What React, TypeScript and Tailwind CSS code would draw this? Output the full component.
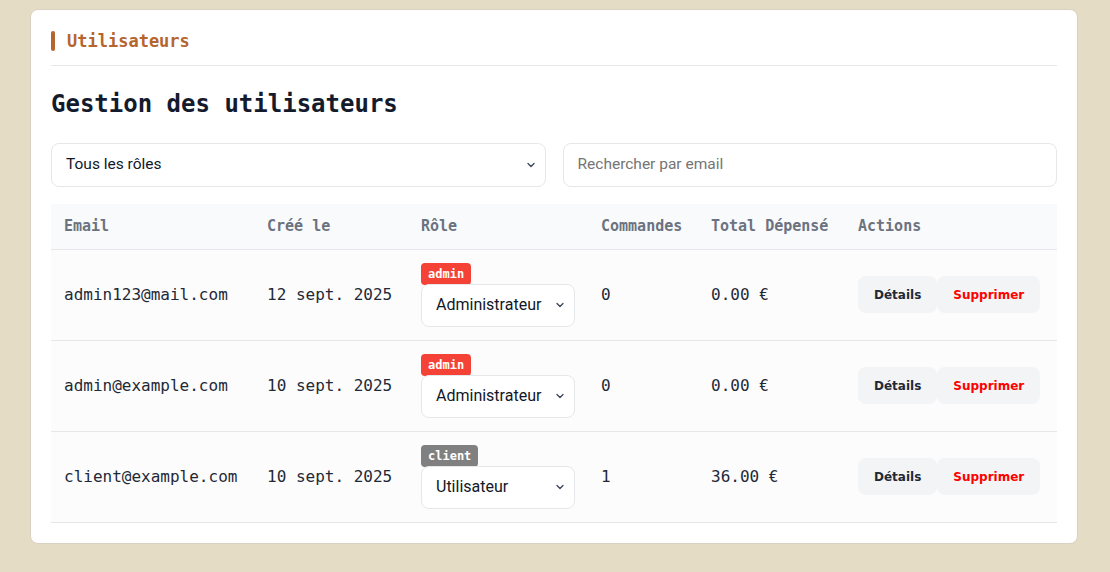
import { ChevronDown } from "lucide-react";

const users = [
  { email: "admin123@mail.com", created: "12 sept. 2025", role: "admin", label: "Administrateur", orders: 0, total: "0.00 €" },
  { email: "admin@example.com", created: "10 sept. 2025", role: "admin", label: "Administrateur", orders: 0, total: "0.00 €" },
  { email: "client@example.com", created: "10 sept. 2025", role: "client", label: "Utilisateur", orders: 1, total: "36.00 €" },
];

const mono = "font-['DejaVu_Sans_Mono',monospace]";

function FakeSelect({ value, className }: { value: string; className: string }) {
  return (
    <div
      className={`flex items-center justify-between rounded-lg border border-[#e5e7eb] bg-white pl-[14px] pr-[8px] font-['Roboto',sans-serif] text-[#111827] ${className}`}
    >
      <span>{value}</span>
      <ChevronDown className="h-[12px] w-[12px] text-[#374151]" strokeWidth={2.5} />
    </div>
  );
}

export default function App() {
  return (
    <div className="min-h-[572px] bg-[#e5dcc6] pt-[9px] pb-[30px]">
      <div className="ml-[30px] w-[1048px] rounded-lg border border-[#d9d2c2] bg-white px-[20px] pt-[21px] pb-[20px]">
        <div className="flex items-center gap-[12px] border-b border-[#e5e7eb] pb-[14px]">
          <span className="h-[20px] w-[4px] rounded-full bg-[#b5652e]" />
          <span className={`${mono} text-[17px] leading-[20px] font-bold text-[#b5652e]`}>Utilisateurs</span>
        </div>

        <h1 className={`${mono} mt-[22px] text-[24px] leading-[32px] font-bold text-[#141b2d]`}>
          Gestion des utilisateurs
        </h1>

        <div className="mt-[23px] grid grid-cols-2 gap-[17px]">
          <FakeSelect value="Tous les rôles" className="h-[44px] text-[15.5px]" />
          <div className="flex h-[44px] items-center rounded-lg border border-[#e5e7eb] bg-white px-[14px] font-['Roboto',sans-serif] text-[15.5px] text-[#757575]">
            Rechercher par email
          </div>
        </div>

        <table className={`${mono} mt-[17px] w-full border-collapse text-left`}>
          <colgroup>
            <col className="w-[203px]" />
            <col className="w-[154px]" />
            <col className="w-[180px]" />
            <col className="w-[110px]" />
            <col className="w-[147px]" />
            <col />
          </colgroup>
          <thead>
            <tr className="h-[45px] border-b border-[#e5e7eb] bg-[#f9fafb] text-[15px] font-bold text-[#6b7280]">
              <th className="pl-[13px] font-bold">Email</th>
              <th className="pl-[13px] font-bold">Créé le</th>
              <th className="pl-[13px] font-bold">Rôle</th>
              <th className="pl-[13px] font-bold">Commandes</th>
              <th className="pl-[13px] font-bold">Total Dépensé</th>
              <th className="pl-[13px] font-bold">Actions</th>
            </tr>
          </thead>
          <tbody>
            {users.map((u) => (
              <tr key={u.email} className="h-[91px] border-b border-[#e5e7eb] bg-[#fcfcfc] text-[16px] text-[#1f2937]">
                <td className="pl-[13px]">{u.email}</td>
                <td className="pl-[13px]">{u.created}</td>
                <td className="pl-[13px]">
                  <div className="flex flex-col items-start">
                    <span
                      className={`rounded-[4px] px-[7px] text-[12px] leading-[22px] font-bold text-white ${
                        u.role === "admin" ? "bg-[#f44336]" : "bg-[#808080]"
                      }`}
                    >
                      {u.role}
                    </span>
                    <FakeSelect value={u.label} className="-mt-px h-[43px] w-[154px] text-[16px]" />
                  </div>
                </td>
                <td className="pl-[13px]">{u.orders}</td>
                <td className="pl-[13px]">{u.total}</td>
                <td className="pl-[13px]">
                  <div className="flex font-['DejaVu_Sans',sans-serif] text-[12px] font-bold">
                    <button className="h-[37px] rounded-lg bg-[#f3f4f6] px-[16px] text-[#1f2937]">Détails</button>
                    <button className="h-[37px] rounded-lg bg-[#f3f4f6] px-[16px] text-[#ff0000]">Supprimer</button>
                  </div>
                </td>
              </tr>
            ))}
          </tbody>
        </table>
      </div>
    </div>
  );
}
